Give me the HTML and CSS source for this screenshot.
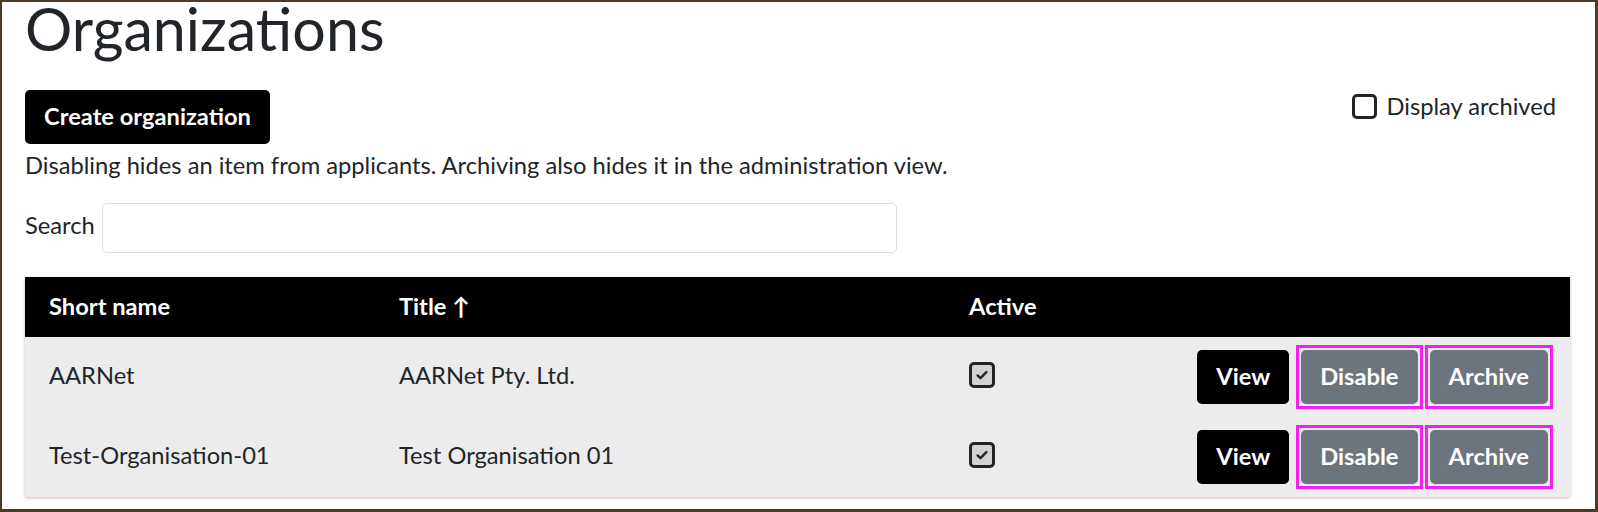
FILE: index.html
```html
<!DOCTYPE html>
<html lang="en">
<head>
<meta charset="utf-8">
<title>Organizations</title>
<link rel="stylesheet" href="styles.css">
</head>
<body>
<div class="frame">
  <h1 class="title">Organizations</h1>
  <div class="toolbar">
    <button class="btn btn-primary btn-create">Create organization</button>
    <label class="archived"><span class="box"></span>Display archived</label>
  </div>
  <p class="help">Disabling hides an item from applicants. Archiving also hides it in the administration view.</p>
  <div class="search">
    <label for="q" class="search-label">Search</label>
    <input id="q" type="text" class="input">
  </div>
  <table class="grid">
    <thead>
      <tr>
        <th class="c1">Short name</th>
        <th class="c2">Title ↑</th>
        <th class="c3">Active</th>
        <th class="c4"></th>
      </tr>
    </thead>
    <tbody>
      <tr>
        <td>AARNet</td>
        <td>AARNet Pty. Ltd.</td>
        <td><span class="check"><svg viewBox="0 0 20 20" width="16" height="16"><path d="M4.5 10.5l3.5 3.5 7.5-7.5" fill="none" stroke="#212529" stroke-width="3" stroke-linecap="round" stroke-linejoin="round"/></svg></span></td>
        <td class="actions"><div class="btns"><button class="btn btn-primary">View</button><span class="hl"><button class="btn btn-secondary">Disable</button></span><span class="hl"><button class="btn btn-secondary">Archive</button></span></div></td>
      </tr>
      <tr>
        <td>Test-Organisation-01</td>
        <td>Test Organisation 01</td>
        <td><span class="check"><svg viewBox="0 0 20 20" width="16" height="16"><path d="M4.5 10.5l3.5 3.5 7.5-7.5" fill="none" stroke="#212529" stroke-width="3" stroke-linecap="round" stroke-linejoin="round"/></svg></span></td>
        <td class="actions"><div class="btns"><button class="btn btn-primary">View</button><span class="hl"><button class="btn btn-secondary">Disable</button></span><span class="hl"><button class="btn btn-secondary">Archive</button></span></div></td>
      </tr>
    </tbody>
  </table>
</div>
</body>
</html>
```
FILE: styles.css
```css
* { box-sizing: border-box; }
html, body { margin: 0; padding: 0; background: #fff; }
body {
  font-family: Lato, "Open Sans", sans-serif;
  font-size: 23.7px;
  line-height: 32px;
  color: #212529;
}
.frame {
  width: 1598px;
  height: 512px;
  border-style: solid;
  border-color: #4b3a2a;
  border-width: 2px 3px 3px 2px;
  padding: 0 25px 0 23px;
}
.title {
  font-size: 59.2px;
  font-weight: 400;
  line-height: 64px;
  margin: -5px 0 0;
}
.toolbar {
  display: flex;
  justify-content: space-between;
  align-items: flex-start;
  margin-top: 29px;
}
.btn {
  font-family: inherit;
  font-size: 23.7px;
  font-weight: 700;
  line-height: 32px;
  padding: 10px 19px 12px;
  border: 0;
  border-radius: 5px;
  color: #fff;
  cursor: pointer;
  display: block;
}
.btn-create { padding: 10px 19px 12px; }
.btn-primary { background: #000; }
.btn-secondary { background: #6c747e; }
.hl {
  display: block;
  border: 3px solid #f41ff0;
  padding: 2px;
  margin: 0 -5px;
}
.archived {
  display: flex;
  align-items: center;
  gap: 9px;
  margin-right: 14px;
}
.box {
  width: 25px;
  height: 25px;
  border: 3px solid #212529;
  border-radius: 5px;
  background: #fff;
}
.help { margin: 5px 0 0; }
.search {
  display: flex;
  align-items: center;
  gap: 7px;
  margin-top: 22px;
}
.search-label { margin-bottom: 6px; }
.input {
  width: 795px;
  height: 50px;
  border: 1px solid #dcdcdc;
  border-radius: 5px;
  font: inherit;
  padding: 0 12px;
}
.grid {
  margin-top: 24px;
  width: 1545px;
  border-collapse: collapse;
  box-shadow: 0 1px 3px rgba(0,0,0,0.25);
}
.grid th {
  background: #000;
  color: #fff;
  font-weight: 700;
  text-align: left;
  height: 60px;
  padding: 0 0 2px 24px;
}
.grid td {
  background: #ececec;
  height: 80px;
  padding: 0 0 4px 24px;
  vertical-align: middle;
}
.c1 { width: 350px; }
.c2 { width: 570px; }
.c3 { width: 230px; }
.grid td.actions { padding: 0 22px 0 0; }
.btns {
  display: flex;
  justify-content: flex-end;
  align-items: center;
  gap: 12px;
}
.check {
  display: flex;
  align-items: center;
  justify-content: center;
  width: 26px;
  height: 26px;
  border: 3px solid #212529;
  border-radius: 5px;
  background: #d2d2d2;
}
```
